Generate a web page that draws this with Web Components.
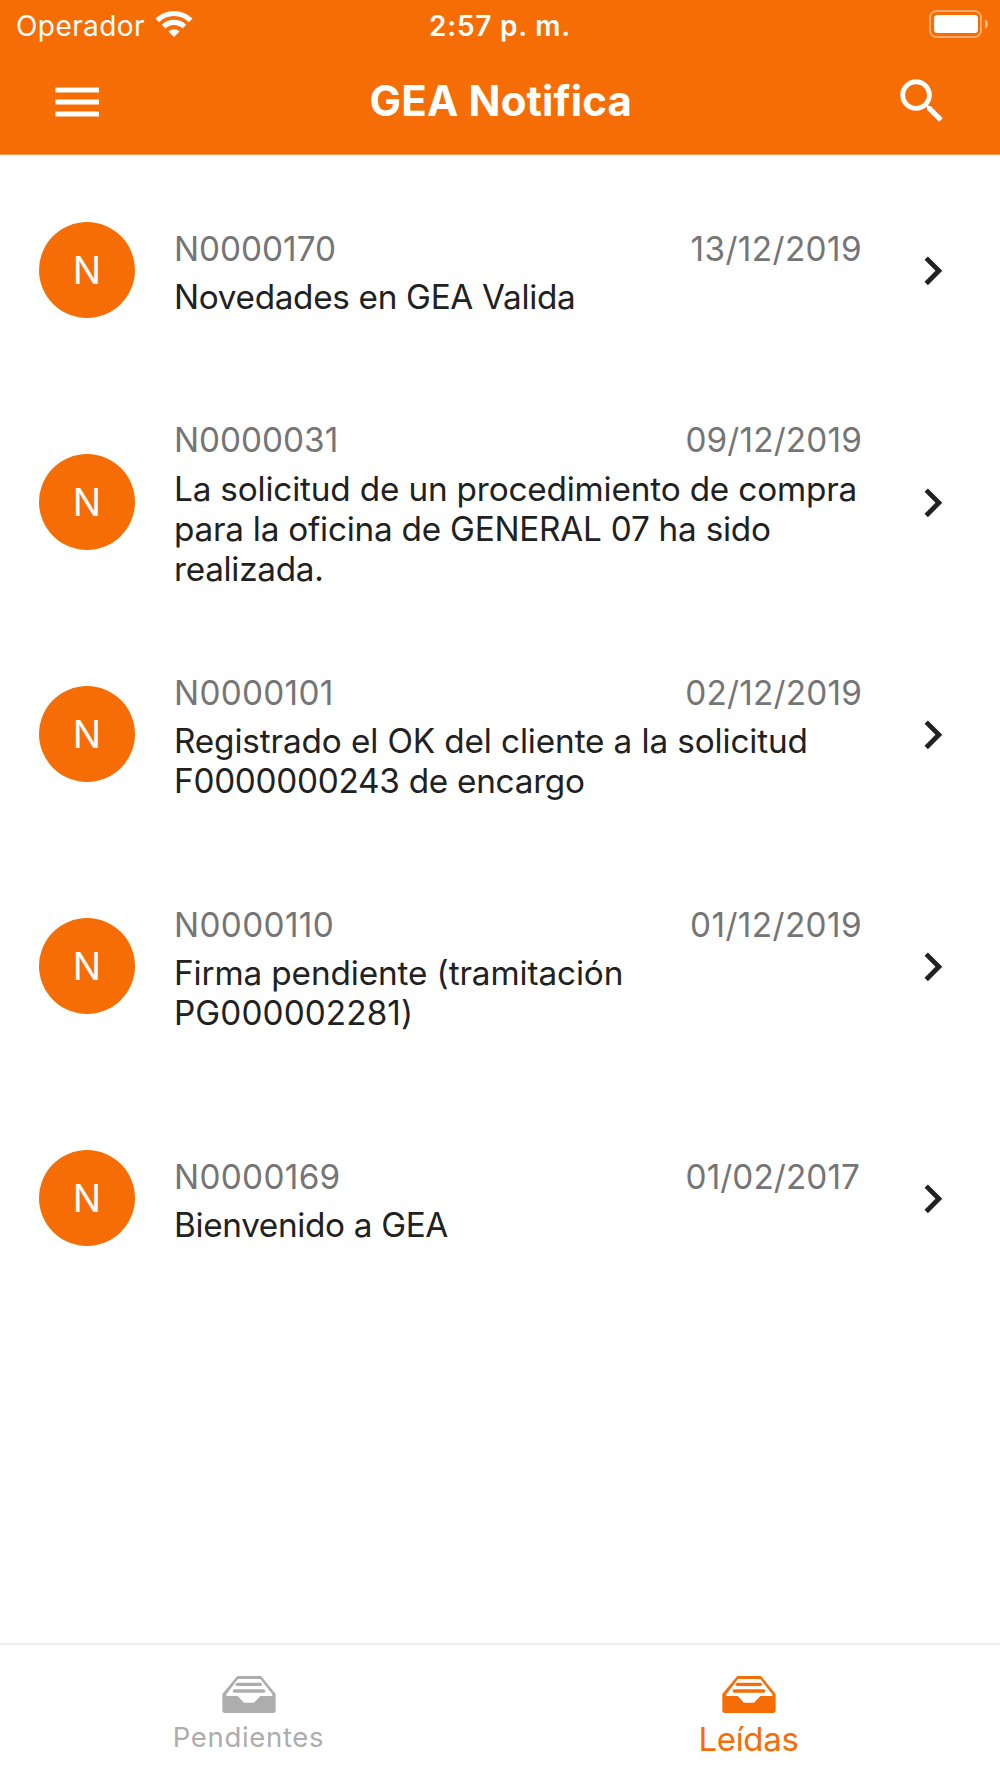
<!DOCTYPE html>
<html lang="es">
<head>
<meta charset="utf-8">
<title>GEA Notifica</title>
<style>
  html, body { margin: 0; padding: 0; background: #fff; }
  body { font-family: Inter, "Liberation Sans", sans-serif; color: #212121; }
  gea-app { --brand: #f76d05; --muted: #757575; --idle: #adadad; }
  [slot="title"] span { display: block; }
</style>
</head>
<body>
<gea-app>
  <gea-status-bar slot="header" carrier="Operador" time="2:57 p. m."></gea-status-bar>
  <gea-nav-bar slot="header">GEA Notifica</gea-nav-bar>

  <gea-notice initial="N">
    <span slot="code">N0000170</span>
    <span slot="date" style="letter-spacing:.4px">13/12/2019</span>
    <div slot="title"><span style="letter-spacing:-.31px">Novedades en GEA Valida</span></div>
  </gea-notice>
  <gea-notice initial="N" style="--gap:9px">
    <span slot="code">N0000031</span>
    <span slot="date" style="letter-spacing:.16px">09/12/2019</span>
    <div slot="title"><span style="letter-spacing:-.172px">La solicitud de un procedimiento de compra</span><span style="letter-spacing:-.232px">para la oficina de GENERAL 07 ha sido</span><span style="letter-spacing:-.28px">realizada.</span></div>
  </gea-notice>
  <gea-notice initial="N">
    <span slot="code" style="letter-spacing:.3px">N0000101</span>
    <span slot="date" style="letter-spacing:.2px">02/12/2019</span>
    <div slot="title"><span style="letter-spacing:-.12px">Registrado el OK del cliente a la solicitud</span><span style="letter-spacing:-.268px">F0000000243 de encargo</span></div>
  </gea-notice>
  <gea-notice initial="N">
    <span slot="code" style="letter-spacing:.36px">N0000110</span>
    <span slot="date" style="letter-spacing:.4px">01/12/2019</span>
    <div slot="title"><span style="letter-spacing:-.11px">Firma pendiente (tramitación</span><span style="letter-spacing:.1px">PG000002281)</span></div>
  </gea-notice>
  <gea-notice initial="N">
    <span slot="code" style="letter-spacing:.33px">N0000169</span>
    <span slot="date" style="letter-spacing:.09px;padding-right:2px">01/02/2017</span>
    <div slot="title"><span style="letter-spacing:-.33px">Bienvenido a GEA</span></div>
  </gea-notice>

  <gea-tab slot="tabs" style="--size:27.5px;--track:.67px;--drop:0px">Pendientes</gea-tab>
  <gea-tab slot="tabs" active style="--size:33px;--track:-.32px;--drop:2px">Leídas</gea-tab>
</gea-app>

<script>
const define = (name, render) => customElements.define(name, class extends HTMLElement {
  constructor() {
    super();
    this.attachShadow({ mode: 'open' }).innerHTML = render(this);
  }
});

define('gea-app', () => `
  <style>
    :host { display: flex; flex-direction: column; width: 1000px; height: 1778px; overflow: hidden; background: #fff; }
    header { background: var(--brand); color: #fff; height: 154px; border-bottom: 1px solid #fa9a51; flex: none; }
    main { flex: 1; min-height: 0; margin-top: -1px; }
    footer { flex: none; height: 133px; border-top: 2px solid #eee; display: flex; }
  </style>
  <header><slot name="header"></slot></header>
  <main><slot></slot></main>
  <footer><slot name="tabs"></slot></footer>`);

define('gea-status-bar', el => `
  <style>
    :host { display: grid; grid-template-columns: 1fr auto 1fr; height: 51px; align-items: center; padding: 0 12px 0 16px; font-size: 28px; line-height: 51px; }
    .carrier { display: flex; align-items: center; gap: 10px; letter-spacing: .42px; }
    .carrier span, .time { padding-top: 1px; line-height: 50px; }
    .time { font-weight: 600; letter-spacing: .76px; margin-right: 4px; }
    .battery { justify-self: end; display: block; margin-top: -3px; }
    .wifi { display: block; margin-top: -4px; }
  </style>
  <div class="carrier"><span>${el.getAttribute('carrier')}</span>
    <svg class="wifi" width="38" height="28" viewBox="0 0 38 28" fill="none" stroke="#fff">
      <path d="M2.3 10.4A23.6 23.6 0 0 1 35.7 10.4" stroke-width="5.2"/>
      <path d="M8.6 16.7A14.7 14.7 0 0 1 29.4 16.7" stroke-width="5.2"/>
      <path d="M13.4 21.6Q19 17 24.6 21.6L19 27.1Z" fill="#fff" stroke="none"/>
    </svg>
  </div>
  <div class="time">${el.getAttribute('time')}</div>
  <svg class="battery" width="59" height="28" viewBox="0 0 59 28">
    <rect x="1" y="1" width="51" height="26" rx="6.5" fill="none" stroke="#fff" stroke-width="2" opacity=".42"/>
    <rect x="5" y="5" width="44" height="18" rx="3.5" fill="#fff"/>
    <path d="M56 9.3Q59 11 59 14.2T56 19.2Z" fill="#fff" opacity=".5"/>
  </svg>`);

define('gea-nav-bar', () => `
  <style>
    :host { display: flex; align-items: center; justify-content: space-between; height: 101px; padding: 0 49px 0 55px; }
    .title { font-size: 42px; font-weight: 700; line-height: 100px; letter-spacing: .14px; margin-right: 6px; padding-bottom: 1px; }
    svg { display: block; }
    .menu { width: 60px; }
    .find { width: 58.3px; padding-bottom: 1px; }
  </style>
  <div class="menu"><svg width="44" height="30" viewBox="0 0 44 30" fill="#fff">
    <path d="M.5 .5H44v5H.5zM.5 12.5H44v5H.5zM.5 24.5H44v5H.5z"/>
  </svg></div>
  <div class="title"><slot></slot></div>
  <div class="find"><svg width="58.3" height="58.3" viewBox="0 0 24 24" fill="#fff">
    <path d="M15.5 14h-.79l-.28-.27C15.41 12.59 16 11.11 16 9.5 16 5.91 13.09 3 9.5 3S3 5.91 3 9.5 5.91 16 9.5 16c1.61 0 3.09-.59 4.23-1.57l.27.28v.79l5 4.99L20.49 19l-4.99-5zm-6 0C7.01 14 5 11.99 5 9.5S7.01 5 9.5 5 14 7.01 14 9.5 11.99 14 9.5 14z"/>
  </svg></div>`);

define('gea-notice', el => `
  <style>
    :host { display: flex; align-items: center; height: 232px; padding: 0 39px; box-sizing: border-box; font-size: 33.3px; line-height: 40px; white-space: nowrap; }
    .avatar { width: 96px; height: 96px; border-radius: 50%; background: var(--brand); color: #fff; font-size: 37.6px; line-height: 98px; text-align: center; flex: none; }
    .text { width: 688px; margin-left: 39px; padding-top: 5px; flex: none; }
    .meta { display: flex; justify-content: space-between; color: var(--muted); margin-bottom: var(--gap, 8px); }
    svg { display: block; margin: 1px 0 0 41.6px; }
  </style>
  <div class="avatar">${el.getAttribute('initial')}</div>
  <div class="text">
    <div class="meta"><slot name="code"></slot><slot name="date"></slot></div>
    <slot name="title"></slot>
  </div>
  <svg width="57.6" height="57.6" viewBox="0 0 24 24" fill="#212121">
    <path d="M10 6L8.59 7.41 13.17 12l-4.58 4.59L10 18l6-6z"/>
  </svg>`);

define('gea-tab', () => `
  <style>
    :host { display: flex; flex-direction: column; align-items: center; flex: 1; padding-top: 31px; color: var(--idle); }
    :host([active]) { color: var(--brand); }
    svg { display: block; margin-right: 2px; }
    .label { font-size: var(--size); letter-spacing: var(--track); line-height: 40px; margin-top: calc(4px + var(--drop)); margin-right: 3px; }
  </style>
  <svg width="54" height="37" viewBox="216 138 162 111" fill="currentColor">
    <path fill-rule="evenodd" d="M262 138H333L377 192V241Q377 249 369 249H225Q217 249 217 241V192ZM264 147L229 193V198H263L282 218H312L331 198H367V193L331 147Z"/>
    <rect x="257" y="158" width="79" height="10" rx="5"/>
    <rect x="248" y="178" width="98" height="10" rx="5"/>
  </svg>
  <div class="label"><slot></slot></div>`);
</script>
</body>
</html>
